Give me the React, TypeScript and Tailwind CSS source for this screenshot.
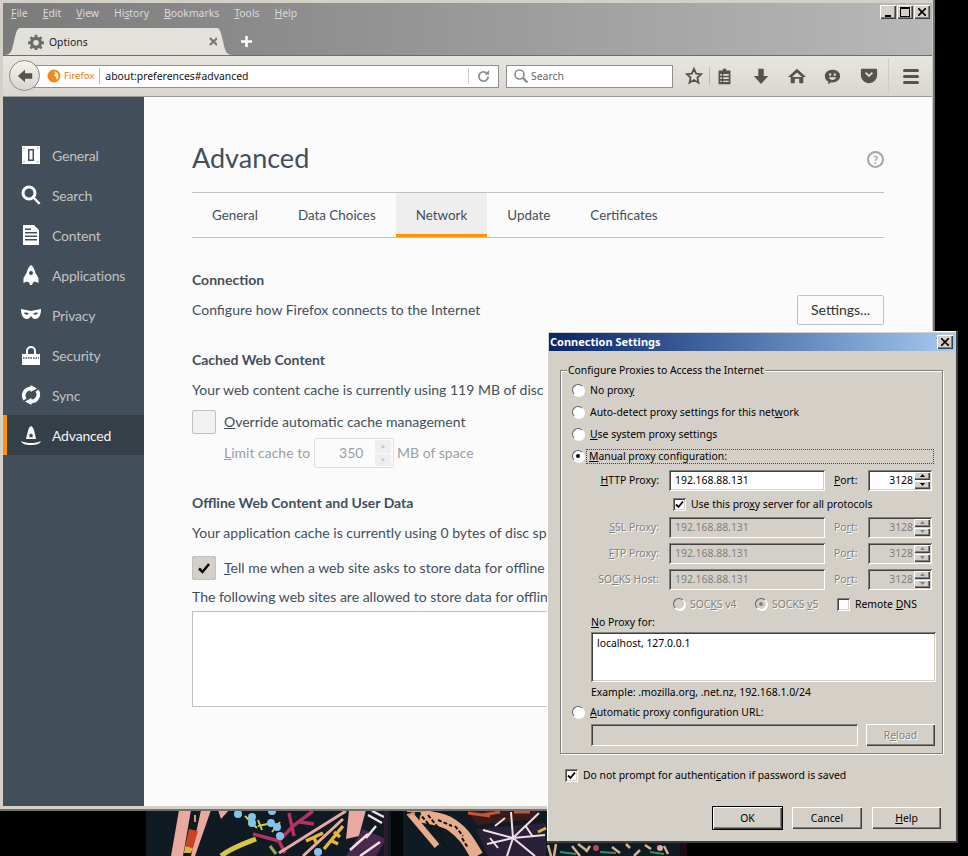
import type { ReactNode } from "react";

const SUNKEN =
  "shadow-[inset_1px_1px_0_#808080,inset_-1px_-1px_0_#fff,inset_2px_2px_0_#404040,inset_-2px_-2px_0_#d4d0c8]";
const RAISED =
  "shadow-[inset_1px_1px_0_#fff,inset_-1px_-1px_0_#404040,inset_-2px_-2px_0_#808080]";

const navItems = ["General", "Search", "Content", "Applications", "Privacy", "Security", "Sync", "Advanced"];
const prefTabs = ["General", "Data Choices", "Network", "Update", "Certificates"];

function NavIcon({ name }: { name: string }) {
  const paths: Record<string, ReactNode> = {
    General: (
      <>
        <path fillRule="evenodd" d="M1 1h18v18H1zM7 4v12h6V4zM8.500 5.500h3v9h-3z" />
        <path fill="#424f5a" d="M2.500 2.500h1v1h-1zM16.500 2.500h1v1h-1zM2.500 16.500h1v1h-1zM16.500 16.500h1v1h-1z" />
      </>
    ),
    Search: (
      <>
        <circle cx="8" cy="8" r="6" fill="none" stroke="#fff" strokeWidth="3" />
        <path d="M12 13.500l1.500-1.500 6 6-1.800 1.800z" />
      </>
    ),
    Content: (
      <path
        fillRule="evenodd"
        d="M2 0h11l5 5v15H2zM4 7v1.500h12V7zM4 10.500V12h12v-1.500zM4 14v1.500h12V14zM4 3.500V5h6V3.500z"
      />
    ),
    Applications: (
      <path
        fillRule="evenodd"
        d="M10 0c2 1.500 3.500 4 4.500 8l3 5v5l-3.500-1.500-2 1-1 2.500h-2L8 17.500l-2-1L2.500 18v-5l3-5C6.500 4 8 1.500 10 0zM10 6a2 2 0 100 4 2 2 0 000-4z"
      />
    ),
    Privacy: (
      <path
        fillRule="evenodd"
        d="M0 4c3 1 7 1 10 2 3-1 7-1 10-2 0 6-2 10-6 10-2 0-3-2-4-3-1 1-2 3-4 3C2 14 0 10 0 4zM3 8c1 2 3 2 5 1-1-1-3-2-5-1zM17 8c-1 2-3 2-5 1 1-1 3-2 5-1z"
      />
    ),
    Security: (
      <>
        <path d="M5 9V6a5 5 0 0110 0v3h-2V6a3 3 0 00-6 0v3z" />
        <path d="M1 9h18v11H1z" />
        <path stroke="#424f5a" strokeWidth="1.400" strokeDasharray="1.500 1" d="M2 13h16" fill="none" />
      </>
    ),
    Sync: (
      <>
        <path d="M10 3.500A7 7 0 004 14.500M10 16.500A7 7 0 0016 5.500" fill="none" stroke="#fff" strokeWidth="3.600" />
        <path d="M9.500 0L16 3.500 9.500 7zM10.500 20L4 16.500l6.500-3.500z" />
      </>
    ),
    Advanced: (
      <>
        <path d="M10 1c2 1 2 2 3 4l2 9H5l2-8c.500-2 1-4 3-5z" />
        <path d="M0 16c3 1.500 6 2 10 2s7-.500 10-2c-1 3-5 4-10 4s-9-1-10-4z" />
        <path fill="#343f48" d="M10 8l.800 1.600 1.700.200-1.200 1.200.300 1.700-1.600-.800-1.600.800.300-1.700-1.200-1.200 1.700-.200z" />
      </>
    ),
  };
  return (
    <svg viewBox="0 0 20 20" className="h-5 w-5 shrink-0" fill="#fff">
      {paths[name]}
    </svg>
  );
}

function ToolIcon({ d, className }: { d: string; className?: string }) {
  return (
    <svg viewBox="0 0 20 20" className={className ?? "h-[18px] w-[18px] shrink-0"} fill="#55534c" fillRule="evenodd">
      <path d={d} />
    </svg>
  );
}

function Wallpaper() {
  const pink = "#e9a8a0";
  const tan = "#e6ad8c";
  const white = "#f1dfe6";
  return (
    <svg className="absolute left-[146px] top-[810px]" width="541" height="46" viewBox="146 810 541 46">
      <rect x="146" y="810" width="541" height="46" fill="#0f1a22" />
      <path d="M179 810h12l-8 46h-12z" fill={pink} />
      <path d="M201 810h10l-16 46h-4z" fill={pink} />
      <path d="M189 829l9 2-5 17-8-2z" fill="#c8451f" />
      <path d="M185 846l8 2-2 5h-7z" fill="#d8b345" />
      <path d="M218 810h11l-8 9z" fill={pink} />
      <path d="M195 815v7" stroke="#c9a84a" strokeWidth="2" />
      <path d="M221 856c10-8 22-12 35-17" stroke="#d8c545" strokeWidth="5" fill="none" />
      <path d="M245 816l12 12M258 826l14-3M262 830l-4-10M272 832l8-10" stroke="#c6cf52" strokeWidth="2" fill="none" />
      <path d="M253 834l26 7 14-15 20-15M289 813l5 23M279 841l6 12M300 822l14 2" stroke="#b82f62" strokeWidth="3.500" fill="none" />
      <path d="M279 853l67-42M303 856l40-37" stroke={pink} strokeWidth="3" fill="none" />
      <path d="M306 841l17-8M313 836l4 8M324 849l19-23M330 840l8 4M334 832l6 5" stroke="#e8b53c" strokeWidth="3.500" fill="none" />
      <path d="M270 846l6 8" stroke="#8fb04a" strokeWidth="3" />
      <path d="M349 810h17l-7 26-13 3z" fill={pink} />
      <path d="M363 829l23 10-10 17h-30z" fill="#4a2a4c" />
      <path d="M350 850l18-16M368 815l14 8M376 826l-10 12M360 856l20-14M372 811l12 6" stroke={white} strokeWidth="2.500" fill="none" />
      <path d="M391 810h12v46h-12z" fill="#05080b" />
      <path d="M386 810v46" stroke="#2a1a2a" strokeWidth="4" />
      <path d="M410 814l27 32" stroke={tan} strokeWidth="6" fill="none" />
      <path d="M420 816c14 2 26 4 33 10 12 8 18 20 24 30" stroke={tan} strokeWidth="13" fill="none" />
      <path d="M418 812l14 16M428 815l16 20M438 820l14 6M455 826l8 10M462 838l6 10M440 838l8 12" stroke="#1a110e" strokeWidth="2" strokeDasharray="4 2" fill="none" />
      <path d="M407 811h19M407 815l8-2" stroke="#d9905f" strokeWidth="2" />
      <path d="M476 829l70-6v33h-58z" fill="#2a2038" />
      <path d="M467 811h70v8l-60 6z" fill="#3a1a1a" />
      <path d="M468 813l22 3M482 815l18-3M514 812h16" stroke="#c6552f" strokeWidth="3" fill="none" />
      <path d="M513 838l-30-8M513 838l-2-26M513 838l26-25M513 838l32-3M513 838l-6 18M513 838l22 18M513 838l-26 6M495 826l10-8M525 825l8 12M490 838l8 10" stroke={white} strokeWidth="2" fill="none" />
      <path d="M538 832l8-4" stroke="#d9b93e" strokeWidth="3" />
      {[
        [238, 814],
        [252, 817],
        [252, 823],
        [272, 811],
        [271, 823],
        [277, 827],
        [280, 836],
        [318, 852],
      ].map(([cx, cy]) => (
        <circle key={`${cx}-${cy}`} cx={cx} cy={cy} r="4" fill="#84c4ea" />
      ))}
      <path d="M548 845l3 11M556 844l-2 12M572 846l8 10M578 844l8 6M590 846l-4 6M612 847l8 6M626 844l4 4M640 850l-6 6M645 845l6 4M664 846l4 8" stroke="#d8b28e" strokeWidth="2.500" />
      <path d="M560 852l16 2M600 852l16 1M650 852l14 2" stroke="#3d8a6a" strokeWidth="2" />
      <circle cx="596" cy="848" r="3" fill="#b84a4a" />
      <circle cx="660" cy="848" r="3" fill="#e3a8b4" />
      <path d="M680 843h7v13h-7z" fill="#1d0a12" />
    </svg>
  );
}

function WinButton({ children }: { children: ReactNode }) {
  return (
    <div className={`flex h-[14px] w-4 items-center justify-center bg-[#d4d0c8] ${RAISED}`}>{children}</div>
  );
}

function Browser() {
  return (
    <div className="absolute left-0 top-0 flex h-[811px] w-[935px] flex-col border-b-[2px] border-r-[2px] border-[#6f6f6f] bg-[#d4d0c8] pl-[3px] pr-[1px] pt-[3px] pb-[3px] [font-family:Lato,'Noto_Sans',sans-serif]">
      {/* タイトル部分 */}
      <div className="flex h-[52px] flex-col bg-gradient-to-r from-[#7b7b7b] to-[#b8b8b8]">
        <div className="flex h-[25px] items-start pl-[8px] pr-[2px] pt-[2px]">
          <div className="flex gap-[15px] text-[10.4px] leading-4 text-[#dadada] [font-family:'Noto_Sans',sans-serif]">
            <span><u>F</u>ile</span>
            <span><u>E</u>dit</span>
            <span><u>V</u>iew</span>
            <span>Hi<u>s</u>tory</span>
            <span><u>B</u>ookmarks</span>
            <span><u>T</u>ools</span>
            <span><u>H</u>elp</span>
          </div>
          <div className="ml-auto flex gap-px">
            <WinButton>
              <span className="mt-[7px] h-[2px] w-[6px] bg-black" />
            </WinButton>
            <WinButton>
              <span className="h-[10px] w-[10px] border border-t-2 border-black" />
            </WinButton>
            <WinButton>
              <svg viewBox="0 0 8 8" className="h-2 w-2" stroke="#000" strokeWidth="1.600">
                <path d="M0 0l8 8M8 0L0 8" />
              </svg>
            </WinButton>
          </div>
        </div>
        <div className="flex h-[27px] items-end">
          <svg width="16" height="27" viewBox="0 0 16 27" className="ml-[1px]">
            <path d="M0 27c8 0 8-6 10-14C12 5 13 0 16 0v27z" fill="#e3e1dc" />
          </svg>
          <div className="flex h-[27px] w-[197px] items-center bg-[#e3e1dc] pl-[8px]">
            <svg viewBox="0 0 20 20" className="h-4 w-4" fill="#6e6e68" fillRule="evenodd">
              <path d="M8.500 1h3l.500 2.600 1.700.700L16 2.800 18 5l-1.500 2.200.700 1.700L20 9.500v3l-2.800.500-.700 1.700L18 17l-2 2-2.300-1.500-1.700.700-.500 2.800h-3L8 18.200l-1.700-.700L4 19l-2-2 1.500-2.300-.700-1.700L0 12.500v-3l2.800-.600.700-1.700L2 5l2-2.200 2.300 1.500L8 3.600zM10 7.500a3.500 3.500 0 100 7 3.500 3.500 0 000-7z" />
            </svg>
            <span className="ml-[5px] mt-[2px] text-[10.4px] text-[#222] [font-family:'Noto_Sans',sans-serif]">Options</span>
            <svg viewBox="0 0 10 10" className="ml-auto mr-[-1px] h-[9px] w-[9px]" stroke="#77766f" strokeWidth="2.400">
              <path d="M1 1l8 8M9 1l-8 8" />
            </svg>
          </div>
          <svg width="16" height="27" viewBox="0 0 16 27">
            <path d="M16 27c-8 0-8-6-10-14C4 5 3 0 0 0v27z" fill="#e3e1dc" />
          </svg>
          <svg viewBox="0 0 10 10" className="mb-[8px] ml-[8px] h-[11px] w-[11px]" stroke="#fff" strokeWidth="2.400">
            <path d="M5 0v10M0 5h10" />
          </svg>
        </div>
      </div>
      {/* ナビゲーションバー */}
      <div className="relative flex h-[42px] items-center border-y border-t-[#6d6d6d] border-b-[#9a9a94] bg-gradient-to-b from-[#e8e6e1] to-[#d9d6cf] pl-[30px] pr-[8px]">
        <div className="absolute left-[6px] top-[4px] z-10 flex h-[31px] w-[31px] items-center justify-center rounded-full border border-[#8c8c86] bg-gradient-to-b from-[#f4f3ef] to-[#d8d5ce]">
          <ToolIcon className="h-[18px] w-[18px]" d="M2 10l8-7v4h8v6h-8v4z" />
        </div>
        <div className="flex h-[23px] w-[466px] items-center border border-[#8f8f8f] bg-white pl-[13px] pr-[8px] text-[10.4px] [font-family:'Noto_Sans',sans-serif]">
          <svg viewBox="0 0 14 14" className="h-[14px] w-[14px]">
            <circle cx="7" cy="7" r="6.500" fill="#f58a13" />
            <path d="M7 2.500a4.500 4.500 0 012 8.500c1.500-2 0-4-2-4 1-1 1.500-3 0-4.500z" fill="#fff" />
          </svg>
          <span className="ml-[3px] mt-px text-[9.500px] text-[#e8790b]">Firefox</span>
          <span className="ml-[5px] h-[16px] w-px bg-[#bdbdbd]" />
          <span className="ml-[5px] mt-px text-[#111]">about:preferences#advanced</span>
          <span className="ml-auto h-[16px] w-px bg-[#cfcfcf]" />
          <svg viewBox="0 0 14 14" className="ml-[8px] h-[13px] w-[13px]" fill="none" stroke="#8d9297" strokeWidth="2">
            <path d="M12 7a5 5 0 11-1.500-3.600" />
            <path d="M13 0v5H8z" fill="#8d9297" stroke="none" />
          </svg>
        </div>
        <div className="ml-[7px] flex h-[23px] w-[167px] items-center border border-[#8f8f8f] bg-white pl-[7px] text-[10.4px] text-[#666] [font-family:'Noto_Sans',sans-serif]">
          <svg viewBox="0 0 14 14" className="h-[14px] w-[14px]" fill="none" stroke="#84898e" strokeWidth="1.600">
            <circle cx="5.500" cy="5.500" r="4.500" />
            <path d="M9 9l4.500 4.500" strokeWidth="2.200" />
          </svg>
          <span className="ml-[3px] mt-px">Search</span>
        </div>
        <div className="ml-[12px] flex items-center">
          <svg viewBox="0 0 20 20" className="h-[18px] w-[18px]" fill="none" stroke="#55534c" strokeWidth="2">
            <path d="M10 2l2.400 5.400 5.600.600-4.200 3.800 1.200 5.700-5-3-5 3 1.200-5.700L2 8l5.600-.600z" />
          </svg>
          <span className="mx-[6px] h-[18px] w-px bg-[#bdbab3]" />
          <ToolIcon
            className="h-[17px] w-[17px]"
            d="M8 1h4v2h5v16H3V3h5zM5 7v2h2V7zM8.500 7v2H15V7zM5 11v2h2v-2zM8.500 11v2H15v-2zM5 15v1.500h2V15zM8.500 15v1.500H15V15z"
          />
          <ToolIcon className="ml-[19px] h-[18px] w-[18px]" d="M7 2h6v8h5l-8 9-8-9h5z" />
          <ToolIcon className="ml-[18px] h-[18px] w-[18px]" d="M10 2l10 9h-3v7h-4.500v-5h-5v5H3v-7H0zM10 6l-5 4.500V11h10v-.500z" />
          <ToolIcon
            className="ml-[18px] h-[17px] w-[17px]"
            d="M10 2c5 0 9 3 9 7.500S15 17 10 17H8l-3 2v-3C2.500 15 1 12.500 1 9.500 1 5 5 2 10 2zM6 6.500v2.500h2.500V6.500zM11.500 6.500v2.500H14V6.500zM5.500 11c1 2 2.500 3 4.500 3s3.500-1 4.500-3z"
          />
          <ToolIcon className="ml-[19px] h-[18px] w-[18px]" d="M2 2h16c1 0 1 1 1 2v5c0 5-4 9-9 9s-9-4-9-9V4c0-1 0-2 1-2zM5.500 7L10 11.500 14.500 7 13 5.500l-3 3-3-3z" />
          <span className="ml-[10px] h-[36px] w-px bg-[#cfccc5]" />
          <div className="ml-[14px] flex w-4 flex-col gap-[3px]">
            <span className="h-[3px] rounded-sm bg-[#55534c]" />
            <span className="h-[3px] rounded-sm bg-[#55534c]" />
            <span className="h-[3px] rounded-sm bg-[#55534c]" />
          </div>
        </div>
      </div>
      {/* 本体 */}
      <div className="flex min-h-0 flex-1 bg-[#fbfbfb]">
        <aside className="w-[141px] shrink-0 bg-[#424f5a] pt-[38px]">
          {navItems.map((item) => {
            const active = item === "Advanced";
            return (
              <div
                key={item}
                className={`flex h-10 items-center border-l-4 pl-[14px] text-[14px] tracking-[-0.2px] ${
                  active ? "border-[#ff9500] bg-[#343f48] text-[#f2f2f2]" : "border-transparent text-[#c1c1c1]"
                }`}
              >
                <NavIcon name={item} />
                <span className="ml-[11px]">{item}</span>
              </div>
            );
          })}
        </aside>
        <main className="w-[740px] pl-12 text-[14px] leading-5 text-[#424f5a]">
          <div className="flex h-[95px] items-start justify-between pr-[1px] pt-[43px]">
            <h1 className="text-[27px] font-normal leading-9">Advanced</h1>
            <div className="mr-[-1px] mt-[11px] flex h-[17px] w-[17px] items-center justify-center rounded-full border-2 border-[#a5a5a5] text-[11px] font-bold leading-none text-[#a5a5a5]">
              ?
            </div>
          </div>
          <div className="flex h-[46px] w-[692px] border-y border-[#c1c1c1] text-[13.400px]">
            {prefTabs.map((tab) => (
              <div
                key={tab}
                className={`flex items-center px-5 ${
                  tab === "Network" ? "border-b-[3px] border-[#ff9500] bg-[#eeeeee] pt-[3px]" : ""
                }`}
              >
                {tab}
              </div>
            ))}
          </div>
          <h2 className="mt-[32px] font-bold">Connection</h2>
          <div className="mt-[5px] flex h-[30px] w-[692px] items-center justify-between">
            <span>Configure how Firefox connects to the Internet</span>
            <button className="h-[30px] w-[87px] rounded-[2px] border border-[#c1c1c1] bg-[#fbfbfb] text-[#333]">
              Settings...
            </button>
          </div>
          <h2 className="mt-[25px] font-bold">Cached Web Content</h2>
          <p className="mt-[10px] whitespace-nowrap">Your web content cache is currently using 119 MB of disc space</p>
          <div className="mt-[10px] flex h-6 items-center">
            <span className="h-6 w-6 rounded-[2px] border border-[#c1c1c1] bg-[#f1f1f1]" />
            <span className="ml-2"><u>O</u>verride automatic cache management</span>
          </div>
          <div className="mt-[4px] flex h-[30px] items-center pl-8 text-[#9a9fa4]">
            <span><u>L</u>imit cache to</span>
            <div className="ml-[4px] flex h-[30px] w-[80px] items-center justify-between rounded-[2px] border border-[#dfdfdf] pl-6 pr-[2px]">
              <span>350</span>
              <div className="flex h-[26px] w-4 flex-col gap-px">
                <span className="flex flex-1 items-center justify-center bg-[#efefef] text-[6px] leading-none text-[#c8c8c8]">▲</span>
                <span className="flex flex-1 items-center justify-center bg-[#efefef] text-[6px] leading-none text-[#c8c8c8]">▼</span>
              </div>
            </div>
            <span className="ml-[3px]">MB of space</span>
          </div>
          <h2 className="mt-[25px] font-bold">Offline Web Content and User Data</h2>
          <p className="mt-[10px] whitespace-nowrap">Your application cache is currently using 0 bytes of disc space</p>
          <div className="mt-[13px] flex h-6 items-center">
            <span className="flex h-6 w-6 shrink-0 items-center justify-center rounded-[2px] border border-[#c1c1c1] bg-[#d4d0c8]">
              <svg viewBox="0 0 14 14" className="h-[14px] w-[14px]" fill="none" stroke="#000" strokeWidth="2.500">
                <path d="M2 7.500l3.500 3.500L12 3" />
              </svg>
            </span>
            <span className="ml-2 whitespace-nowrap"><u>T</u>ell me when a web site asks to store data for offline use</span>
          </div>
          <p className="mt-[7px] whitespace-nowrap">The following web sites are allowed to store data for offline use</p>
          <div className="mt-[4px] h-[96px] w-[692px] border border-[#c1c1c1] bg-white" />
        </main>
      </div>
    </div>
  );
}

function Radio({ checked, disabled }: { checked?: boolean; disabled?: boolean }) {
  return (
    <span
      className={`flex h-3 w-3 shrink-0 items-center justify-center rounded-full border border-b-white border-l-[#606060] border-r-white border-t-[#606060] shadow-[1px_1px_0_#fff] ${
        disabled ? "bg-[#d4d0c8]" : "bg-white"
      }`}
    >
      {checked && <span className={`h-1 w-1 rounded-full ${disabled ? "bg-[#808080]" : "bg-black"}`} />}
    </span>
  );
}

function Check({ checked }: { checked?: boolean }) {
  return (
    <span className={`flex h-[13px] w-[13px] shrink-0 items-center justify-center bg-white ${SUNKEN}`}>
      {checked && (
        <svg viewBox="0 0 9 9" className="h-[9px] w-[9px]" fill="none" stroke="#000" strokeWidth="1.800">
          <path d="M1 4.500l2.500 2.500L8 1.500" />
        </svg>
      )}
    </span>
  );
}

function RadioRow({ checked, children }: { checked?: boolean; children: ReactNode }) {
  return (
    <div className="flex h-[22px] items-center pl-[11px]">
      <Radio checked={checked} />
      <span
        className={`ml-[2px] ${
          checked ? "flex h-[15px] w-[348px] items-center border border-dotted border-[#444] pl-[2px]" : "pl-[4px]"
        }`}
      >
        {children}
      </span>
    </div>
  );
}

function Spin({ disabled }: { disabled?: boolean }) {
  const arrow = disabled ? "#808080" : "#000";
  return (
    <span className="flex h-full w-4 flex-col gap-px">
      <span className={`flex flex-1 items-center justify-center bg-[#d4d0c8] ${RAISED}`}>
        <svg viewBox="0 0 5 3" className="h-[3px] w-[5px]" fill={arrow}><path d="M2.500 0L5 3H0z" /></svg>
      </span>
      <span className={`flex flex-1 items-center justify-center bg-[#d4d0c8] ${RAISED}`}>
        <svg viewBox="0 0 5 3" className="h-[3px] w-[5px]" fill={arrow}><path d="M2.500 3L5 0H0z" /></svg>
      </span>
    </span>
  );
}

function ProxyRow({ label, disabled, className }: { label: ReactNode; disabled?: boolean; className: string }) {
  const tone = disabled ? "text-[#808080] [text-shadow:1px_1px_0_#fff]" : "text-black";
  const field = disabled ? "bg-[#d4d0c8] text-[#808080]" : "bg-white text-black";
  return (
    <div className={`flex h-5 items-center ${className}`}>
      <span className={`w-[99px] pr-[10px] text-right ${tone}`}>{label}</span>
      <div className={`flex h-[21px] w-[156px] items-center pl-[6px] ${field} ${SUNKEN}`}>192.168.88.131</div>
      <span className={`ml-[9px] w-[34px] ${tone}`}>
        {disabled ? <>Po<u>r</u>t:</> : <><u>P</u>ort:</>}
      </span>
      <div className={`flex h-[21px] w-[64px] items-center justify-end py-[2px] pr-[2px] ${field} ${SUNKEN}`}>
        <span className="mr-px">3128</span>
        <Spin disabled={disabled} />
      </div>
    </div>
  );
}

function DlgButton({ children, primary, disabled }: { children: ReactNode; primary?: boolean; disabled?: boolean }) {
  return (
    <button
      className={`flex h-[22px] items-center justify-center bg-[#d4d0c8] ${RAISED} ${primary ? "outline outline-1 outline-black" : ""} ${
        disabled ? "text-[#808080] [text-shadow:1px_1px_0_#fff]" : "text-black"
      }`}
    >
      {children}
    </button>
  );
}

function ConnectionDialog() {
  return (
    <div className="absolute left-[547px] top-[331px] h-[512px] w-[411px] border-b-2 border-r-2 border-b-[#404040] border-r-[#404040] bg-[#d4d0c8] pl-[2px] pr-[1px] pt-[2px] text-[10.4px] leading-[14px] text-black shadow-[inset_1px_1px_0_#fff] [font-family:'Noto_Sans',sans-serif]">
      <div className="flex h-[18px] items-center justify-between bg-gradient-to-r from-[#0a246a] to-[#a6caf0] pl-[1px] pr-[2px] text-[11px] font-bold text-white">
        <span>Connection Settings</span>
        <span className={`flex h-[14px] w-4 items-center justify-center bg-[#d4d0c8] ${RAISED}`}>
          <svg viewBox="0 0 8 8" className="h-2 w-2" stroke="#000" strokeWidth="1.600">
            <path d="M0 0l8 8M8 0L0 8" />
          </svg>
        </span>
      </div>
      <fieldset className="ml-[11px] mt-[12px] h-[391px] w-[383px] border border-[#808080] shadow-[1px_1px_0_#fff,inset_1px_1px_0_#fff]">
        <legend className="ml-[6px] bg-[#d4d0c8] px-px">Configure Proxies to Access the Internet</legend>
        <div className="pt-[2px]">
          <RadioRow>No prox<u>y</u></RadioRow>
          <RadioRow>Auto-detect proxy settings for this net<u>w</u>ork</RadioRow>
          <RadioRow><u>U</u>se system proxy settings</RadioRow>
          <RadioRow checked><u>M</u>anual proxy configuration:</RadioRow>
          <ProxyRow className="mt-[3px] pl-[9px]" label={<><u>H</u>TTP Proxy:</>} />
          <div className="mt-[4px] flex h-[20px] items-center pl-[112px]">
            <Check checked />
            <span className="ml-[5px]">Use this pro<u>x</u>y server for all protocols</span>
          </div>
          <ProxyRow disabled className="mt-[3px] pl-[9px]" label={<><u>S</u>SL Proxy:</>} />
          <ProxyRow disabled className="mt-[6px] pl-[9px]" label={<><u>F</u>TP Proxy:</>} />
          <ProxyRow disabled className="mt-[6px] pl-[9px]" label={<>SO<u>C</u>KS Host:</>} />
          <div className="mt-[5px] flex h-[20px] items-center pl-[112px]">
            <Radio disabled />
            <span className="ml-[5px] w-[65px] text-[#808080] [text-shadow:1px_1px_0_#fff]">SOC<u>K</u>S v4</span>
            <Radio disabled checked />
            <span className="ml-[5px] w-[65px] text-[#808080] [text-shadow:1px_1px_0_#fff]">SOCKS <u>v</u>5</span>
            <Check />
            <span className="ml-[5px]">Remote <u>D</u>NS</span>
          </div>
          <div className="mt-[1px] pl-[30px]"><u>N</u>o Proxy for:</div>
          <div className={`ml-[30px] mt-[3px] h-[50px] w-[345px] bg-white pl-[6px] pt-[4px] ${SUNKEN}`}>localhost, 127.0.0.1</div>
          <div className="mt-[3px] pl-[30px]">Example: .mozilla.org, .net.nz, 192.168.1.0/24</div>
          <div className="mt-[2px]">
            <RadioRow><u>A</u>utomatic proxy configuration URL:</RadioRow>
          </div>
          <div className="ml-[30px] mt-[1px] flex w-[344px] items-center justify-between">
            <div className={`h-[22px] w-[267px] ${SUNKEN}`} />
            <DlgButton disabled>
              <span className="w-[69px]">R<u>e</u>load</span>
            </DlgButton>
          </div>
        </div>
      </fieldset>
      <div className="ml-[16px] mt-[14px] flex items-center">
        <Check checked />
        <span className="ml-[5px]">Do not prompt for authenti<u>c</u>ation if password is saved</span>
      </div>
      <div className="ml-[164px] mt-[25px] flex gap-[10px]">
        <DlgButton primary><span className="w-[69px]">OK</span></DlgButton>
        <DlgButton><span className="w-[70px]">Cancel</span></DlgButton>
        <DlgButton><span className="w-[69px]"><u>H</u>elp</span></DlgButton>
      </div>
    </div>
  );
}

export default function App() {
  return (
    <div className="relative h-[856px] w-[968px] overflow-hidden bg-black">
      <Wallpaper />
      <Browser />
      <ConnectionDialog />
    </div>
  );
}
